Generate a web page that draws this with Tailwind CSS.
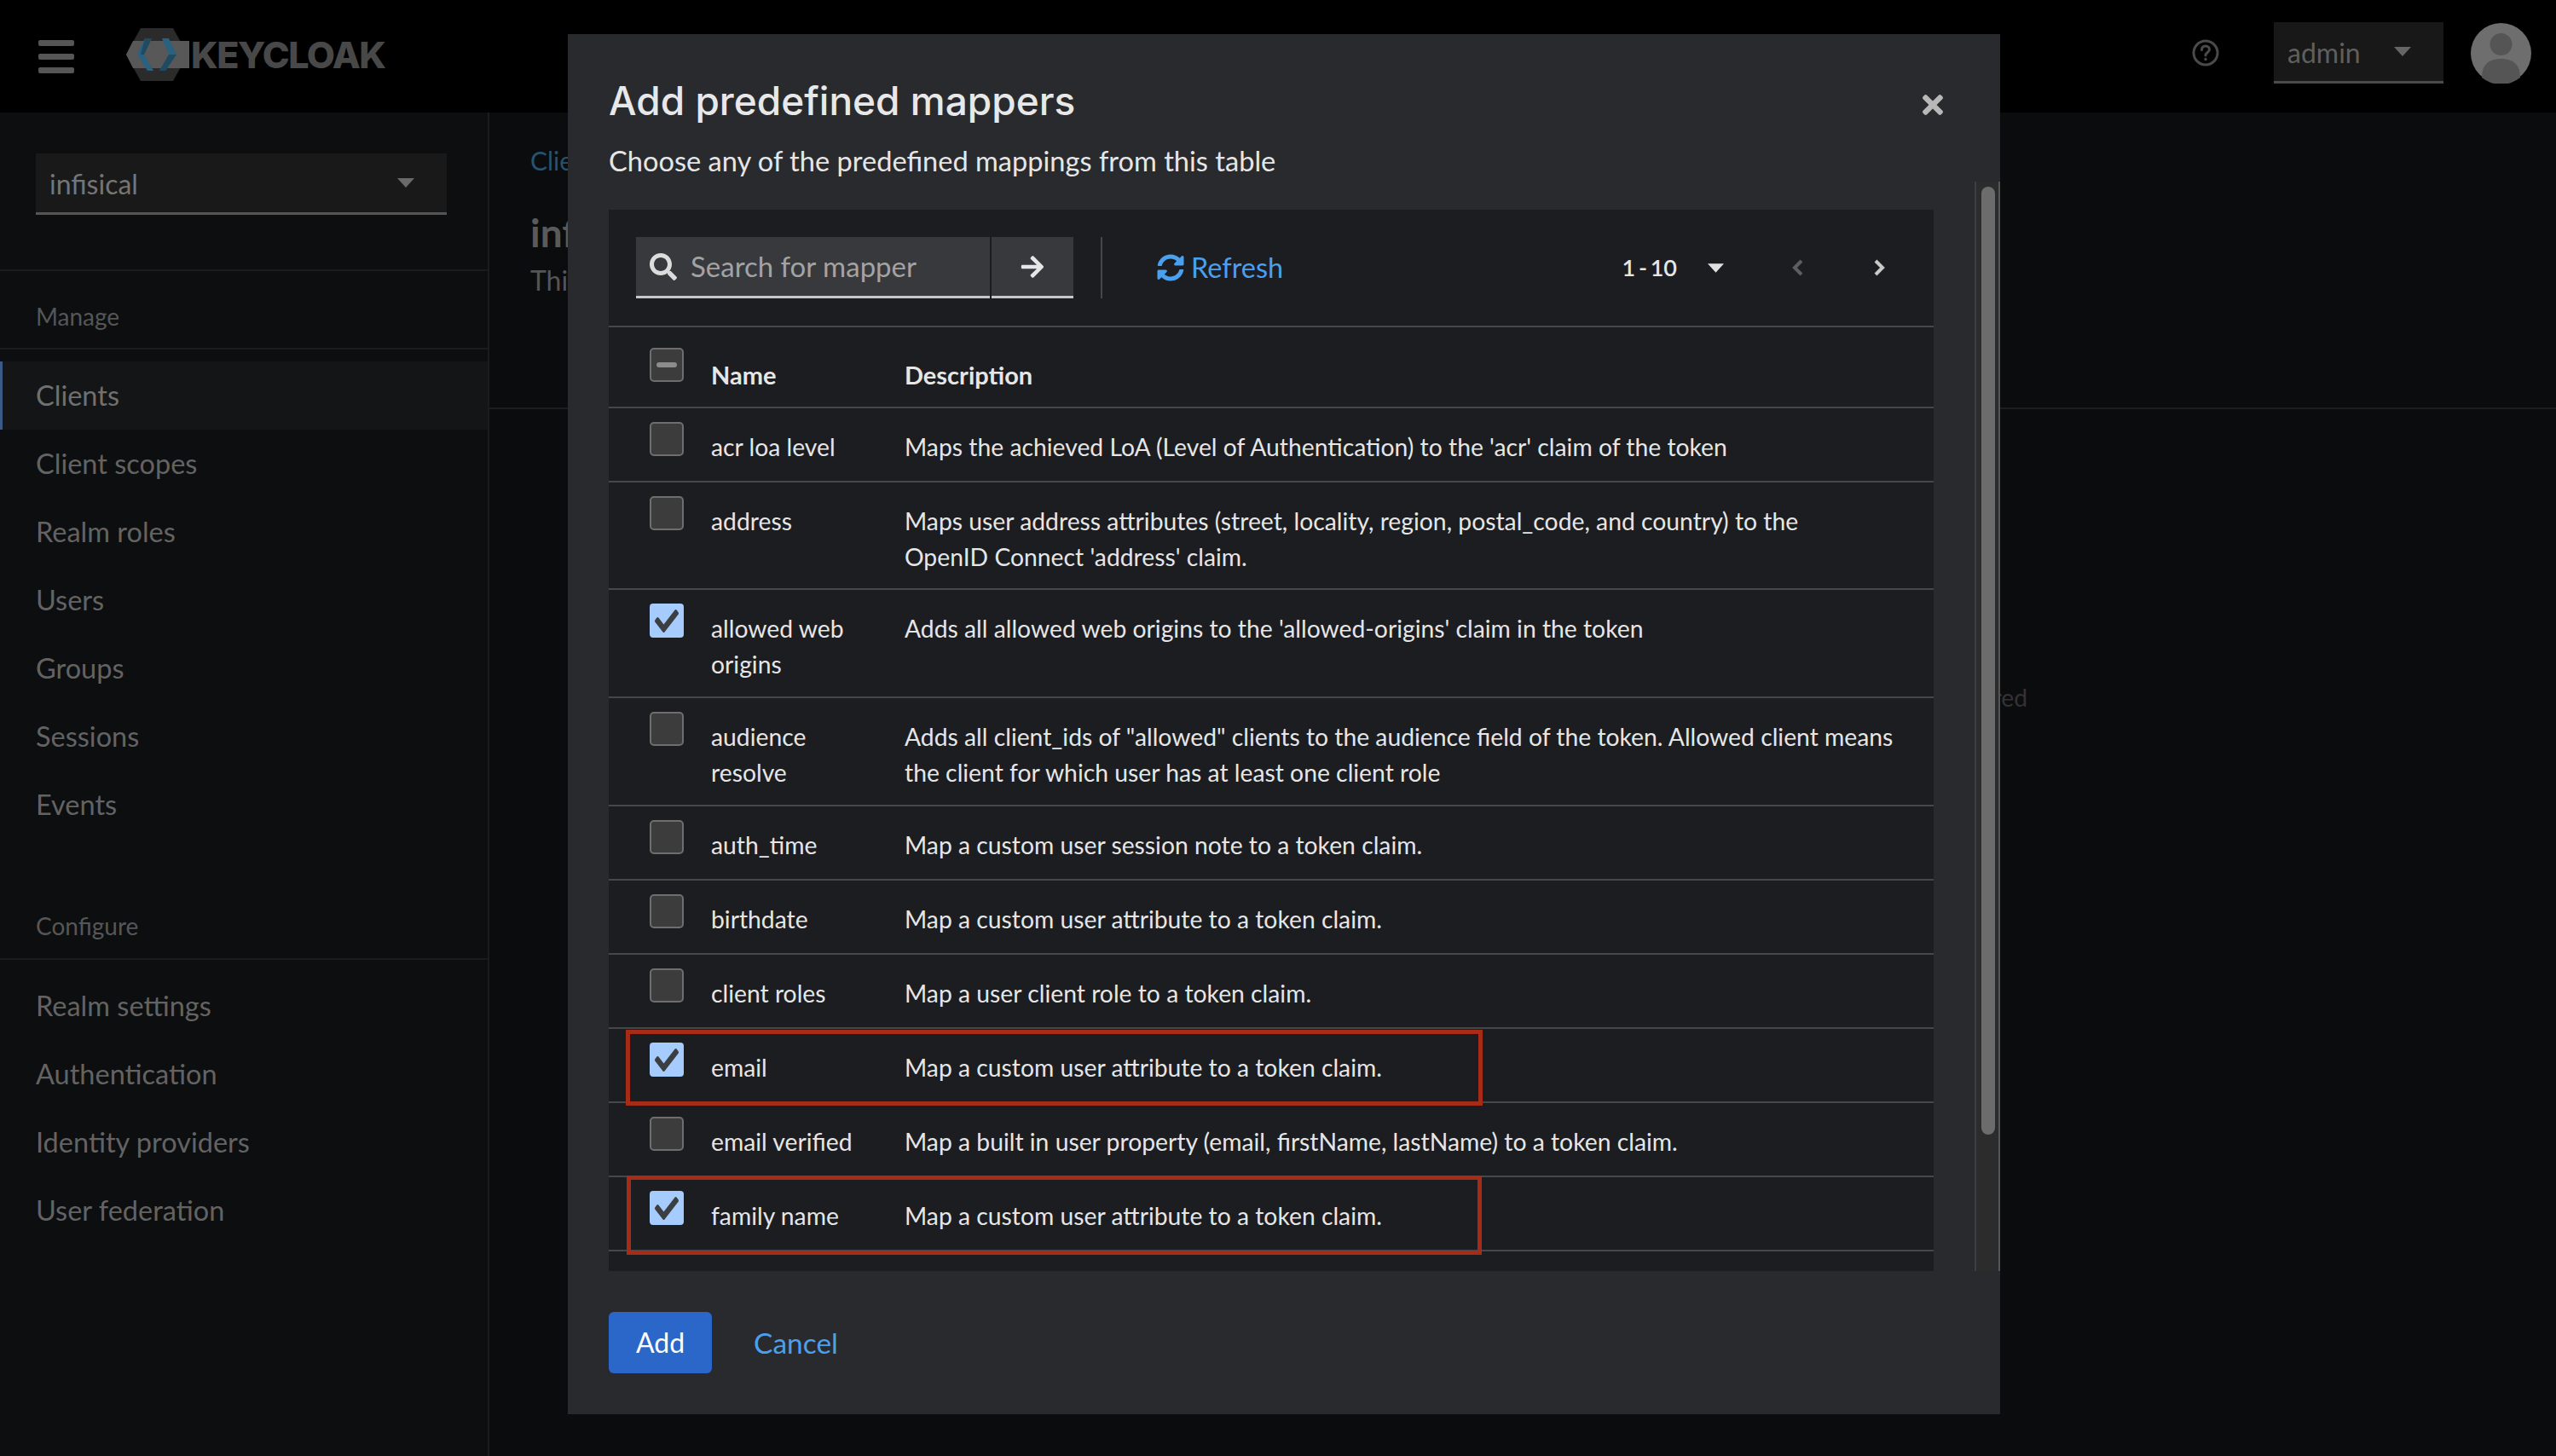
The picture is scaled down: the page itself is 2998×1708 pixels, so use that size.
<!DOCTYPE html>
<html lang="en">
<head>
    <meta charset="UTF-8">
    <title>Keycloak - Add predefined mappers</title>
    <script src="https://cdn.jsdelivr.net/npm/@tailwindcss/browser@4"></script>
</head>
<body class="relative w-[2998px] h-[1708px] overflow-hidden bg-[#0b0c0e] font-[Lato,sans-serif] text-[28.3px]">
    <svg class="hidden">
        <symbol id="check" viewBox="0 64 512 384" preserveAspectRatio="none"><path d="M173.898 439.404l-166.4-166.4c-9.997-9.997-9.997-26.206 0-36.204l36.203-36.204c9.997-9.998 26.207-9.998 36.204 0L192 312.69 432.095 72.596c9.997-9.997 26.207-9.997 36.204 0l36.203 36.204c9.997 9.997 9.997 26.206 0 36.204l-294.4 294.401c-9.998 9.997-26.207 9.997-36.204-.001z"/></symbol>
    </svg>

    <!-- page behind the modal, already dimmed -->
    <header class="flex items-center h-[132px] bg-black">
        <div class="flex flex-col gap-[9px] ml-[45px] w-[42px]">
            <span class="h-[7px] rounded-[2px] bg-[#565656]"></span>
            <span class="h-[7px] rounded-[2px] bg-[#565656]"></span>
            <span class="h-[7px] rounded-[2px] bg-[#565656]"></span>
        </div>
        <svg class="ml-[61px] mt-[-4px]" width="74" height="62" viewBox="148 33 74 62">
            <polygon points="148,64 165,33 203,33 220,64 203,95 165,95" fill="#2b2b2b"/>
            <polygon points="156,48 222,48 222,80 156,80 148,64" fill="#585858"/>
            <polygon points="170,45 178,45 169,64 180,83 173,83 161,64" fill="#2a617f"/>
            <polygon points="190,45 198,45 207,64 194,83 187,83 198,64" fill="#2a617f"/>
            <polygon points="170,45 178,45 169,64 165,64" fill="#1f4a62"/>
            <polygon points="198,64 207,64 194,83 187,83" fill="#1f4a62"/>
        </svg>
        <span class="font-[Inter,sans-serif] font-extrabold text-[43px] tracking-[-1.5px] text-[#484848] ml-[2px] mt-[-4px]">KEYCLOAK</span>
        <svg class="ml-auto mt-[-8px]" width="32" height="32" viewBox="0 0 32 32" fill="none" stroke="#4a4a4a" stroke-width="3"><circle cx="16" cy="16" r="14"/><path d="M11.5 12.5c0-3 2-4.500 4.500-4.500s4.500 1.700 4.500 4c0 3.500-4.500 3.500-4.500 7" stroke-linecap="round"/><circle cx="16" cy="23.500" r="1" fill="#4a4a4a" stroke-width="1.500"/></svg>
        <div class="flex items-center ml-[64px] mt-[-8px] w-[199px] h-[72px] bg-[#181818] border-b-[3px] border-[#4b4b4b] pl-[16px] text-[32px] text-[#5f5f5f]">
            <span class="mt-[2px]">admin</span>
            <svg class="ml-[39px]" width="20" height="11" viewBox="0 0 20 11"><polygon points="0,0 20,0 10,11" fill="#666"/></svg>
        </div>
        <svg class="ml-[32px] mr-[29px] mt-[-8px]" width="71" height="71" viewBox="0 0 71 71"><circle cx="35.500" cy="35.500" r="35.500" fill="#6e6e6e"/><circle cx="35.500" cy="25" r="13" fill="#555"/><path d="M13 64c0-16 9-22 22.500-22S58 48 58 64a35.500 35.500 0 0 1-45 0z" fill="#555"/></svg>
    </header>

    <div class="flex h-[1576px]">
        <aside class="w-[574px] shrink-0 border-r-2 border-[#1a1c1e] bg-[#0d0e10]">
            <div class="ml-[42px] mr-[48px] mt-[48px] flex items-center justify-between h-[72px] bg-[#19191a] border-b-[3px] border-[#555] pl-[16px] pr-[38px] text-[#757575] text-[32px]">
                <span class="mt-[2px]">infisical</span>
                <svg width="20" height="11" viewBox="0 0 20 11"><polygon points="0,0 20,0 10,11" fill="#6a6a6a"/></svg>
            </div>
            <div class="mt-[64px] border-t-2 border-[#1a1c1e] h-[92px] pt-[16px] pl-[42px] flex items-center text-[28px] text-[#565656]">Manage</div>
            <nav class="border-t-2 border-[#1a1c1e] pt-[14px] text-[32.5px] text-[#636363]">
                <div class="flex items-center h-[80px] pl-[39px] bg-[#131517] border-l-[3px] border-[#3b5a85] text-[#707070]">Clients</div>
                <div class="flex items-center h-[80px] pl-[42px]">Client scopes</div>
                <div class="flex items-center h-[80px] pl-[42px]">Realm roles</div>
                <div class="flex items-center h-[80px] pl-[42px]">Users</div>
                <div class="flex items-center h-[80px] pl-[42px]">Groups</div>
                <div class="flex items-center h-[80px] pl-[42px]">Sessions</div>
                <div class="flex items-center h-[80px] pl-[42px]">Events</div>
            </nav>
            <div class="mt-[64px] h-[78px] pl-[42px] flex items-center text-[28px] text-[#565656] border-b-2 border-[#1a1c1e]">Configure</div>
            <nav class="pt-[14px] text-[32.5px] text-[#636363]">
                <div class="flex items-center h-[80px] pl-[42px]">Realm settings</div>
                <div class="flex items-center h-[80px] pl-[42px]">Authentication</div>
                <div class="flex items-center h-[80px] pl-[42px]">Identity providers</div>
                <div class="flex items-center h-[80px] pl-[42px]">User federation</div>
            </nav>
        </aside>
        <main class="flex-1">
            <div class="h-[348px] border-b-2 border-[#1c1e20] pl-[48px] pt-[34px]">
                <div class="text-[30px] text-[#265273]">Clients</div>
                <div class="mt-[34px] text-[46px] font-bold text-[#5a5a5a] leading-[56px]">infisical</div>
                <div class="mt-[4px] text-[32px] text-[#555]">This client</div>
            </div>
            <div class="mt-[317px] pr-[620px] text-right text-[28.3px] text-[#333]">There are no mappers configured</div>
        </main>
    </div>

    <!-- modal -->
    <section class="absolute left-[666px] top-[40px] w-[1680px] h-[1619px] bg-[#292a2e] pl-[48px] text-[#e6e6e6]">
        <h1 class="pt-[45px] font-[Inter,sans-serif] text-[46px] leading-[66px] font-medium text-[#e8e8e8]">Add predefined mappers</h1>
        <p class="mt-[16px] text-[32.6px] leading-[44px]">Choose any of the predefined mappings from this table</p>
        <svg class="absolute right-[67px] top-[71px]" width="24" height="24" viewBox="22 80 308 352"><path fill="#b8b8b8" d="M242.72 256l100.07-100.07c12.28-12.28 12.28-32.19 0-44.48l-22.24-22.24c-12.28-12.28-32.19-12.28-44.48 0L176 189.28 75.93 89.21c-12.28-12.28-32.19-12.28-44.48 0L9.21 111.45c-12.28 12.28-12.28 32.19 0 44.48L109.28 256 9.21 356.07c-12.28 12.28-12.28 32.19 0 44.48l22.24 22.24c12.28 12.28 32.2 12.28 44.48 0L176 322.72l100.07 100.07c12.28 12.28 32.2 12.28 44.48 0l22.24-22.24c12.28-12.28 12.28-32.19 0-44.48L242.72 256z"/></svg>

        <div class="absolute left-[48px] top-[206px] w-[1554px] h-[1245px] overflow-hidden bg-[#1c1d21]">
            <div class="flex items-start h-[138px] pt-[32px] pl-[32px] border-b-2 border-[#45474b]">
                <div class="flex items-center w-[415px] h-[72px] bg-[#38393c] border-b-[3px] border-[#c7c7c7] pl-[16px] text-[33px] text-[#a3a3a3]">
                    <svg width="32" height="32" viewBox="0 0 512 512"><path fill="#dcdcdc" d="M505 442.7L405.3 343c-4.5-4.5-10.6-7-17-7H372c27.600-35.300 44-79.700 44-128C416 93.100 322.900 0 208 0S0 93.100 0 208s93.100 208 208 208c48.300 0 92.700-16.400 128-44v16.300c0 6.400 2.500 12.500 7 17l99.700 99.700c9.400 9.400 24.600 9.400 33.900 0l28.300-28.300c9.400-9.400 9.400-24.600.1-34zM208 336c-70.700 0-128-57.200-128-128 0-70.700 57.200-128 128-128 70.700 0 128 57.200 128 128 0 70.700-57.200 128-128 128z"/></svg>
                    <span class="ml-[16px]">Search for mapper</span>
                </div>
                <div class="flex items-center justify-center ml-[2px] w-[96px] h-[72px] bg-[#38393c] border-b-[3px] border-[#c7c7c7]">
                    <svg width="28" height="30" viewBox="0 0 448 512"><path fill="#e6e6e6" d="M190.500 66.900l22.200-22.200c9.400-9.400 24.600-9.400 33.900 0L441 239c9.400 9.400 9.400 24.600 0 33.900L246.600 467.300c-9.400 9.400-24.600 9.400-33.900 0l-22.200-22.200c-9.500-9.500-9.300-25 .4-34.300L311.400 296H24c-13.300 0-24-10.700-24-24v-32c0-13.300 10.700-24 24-24h287.400L190.900 101.200c-9.800-9.300-10-24.800-.4-34.300z"/></svg>
                </div>
                <div class="ml-[32px] w-[2px] h-[72px] bg-[#45474b]"></div>
                <div class="flex items-center h-[72px] ml-[64px] text-[32.5px] text-[#4aa0ee]">
                    <svg width="32" height="32" viewBox="0 0 512 512"><path fill="#4aa0ee" d="M370.720 133.280C339.458 104.008 298.888 87.962 255.848 88c-77.458.068-144.328 53.178-162.791 126.850-1.344 5.363-6.122 9.150-11.651 9.150H24.103c-7.498 0-13.194-6.807-11.807-14.176C33.933 94.924 134.813 8 256 8c66.448 0 126.791 26.136 171.315 68.685L463.030 40.970C478.149 25.851 504 36.559 504 57.941V192c0 13.255-10.745 24-24 24H345.941c-21.382 0-32.090-25.851-16.971-40.971l41.750-41.749zM32 296h134.059c21.382 0 32.090 25.851 16.971 40.971l-41.750 41.750c31.262 29.273 71.835 45.319 114.876 45.280 77.418-.07 144.315-53.144 162.787-126.849 1.344-5.363 6.122-9.150 11.651-9.150h57.304c7.498 0 13.194 6.807 11.807 14.176C478.067 417.076 377.187 504 256 504c-66.448 0-126.791-26.136-171.315-68.685L48.970 471.030C33.851 486.149 8 475.441 8 454.059V320c0-13.255 10.745-24 24-24z"/></svg>
                    <span class="ml-[8px]">Refresh</span>
                </div>
                <div class="flex items-center h-[72px] ml-auto text-[27px] text-[#e6e6e6] font-semibold">
                    <span class="[word-spacing:-3px]">1 - 10</span>
                    <svg class="ml-[36px]" width="19" height="11" viewBox="0 0 20 11"><polygon points="0,0 20,0 10,11" fill="#e0e0e0"/></svg>
                    <svg class="ml-[79px]" width="16" height="20" viewBox="0 0 16 20" fill="none" stroke="#5c5e62" stroke-width="4"><polyline points="12,2 4,10 12,18"/></svg>
                    <svg class="ml-[79px] mr-[56px]" width="16" height="20" viewBox="0 0 16 20" fill="none" stroke="#c8c8c8" stroke-width="4"><polyline points="4,2 12,10 4,18"/></svg>
                </div>
            </div>

            <div class="flex h-[95px] border-b-2 border-[#45474b]">
                <div class="w-[120px] pl-[48px] pt-[24px]">
                    <div class="flex items-center justify-center w-[40px] h-[40px] rounded-[5px] bg-[#3c3c3c] border-2 border-[#6e6e6e]"><span class="w-[24px] h-[6px] rounded-[3px] bg-[#8c8c8c]"></span></div>
                </div>
                <div class="w-[227px] pt-[36px] text-[29px] leading-[40px] font-bold">Name</div>
                <div class="flex-1 pt-[36px] text-[29px] leading-[40px] font-bold">Description</div>
            </div>

            <div class="flex h-[87px] border-b-2 border-[#45474b] leading-[42px]">
                <div class="w-[120px] pl-[48px] pt-[16px]"><div class="w-[40px] h-[40px] rounded-[5px] bg-[#3c3c3c] border-2 border-[#6e6e6e]"></div></div>
                <div class="w-[227px] pt-[24px]">acr loa level</div>
                <div class="flex-1 pt-[24px]">Maps the achieved LoA (Level of Authentication) to the 'acr' claim of the token</div>
            </div>
            <div class="flex h-[126px] border-b-2 border-[#45474b] leading-[42px]">
                <div class="w-[120px] pl-[48px] pt-[16px]"><div class="w-[40px] h-[40px] rounded-[5px] bg-[#3c3c3c] border-2 border-[#6e6e6e]"></div></div>
                <div class="w-[227px] pt-[24px]">address</div>
                <div class="flex-1 pt-[24px]">Maps user address attributes (street, locality, region, postal_code, and country) to the<br>OpenID Connect 'address' claim.</div>
            </div>
            <div class="flex h-[127px] border-b-2 border-[#45474b] leading-[42px]">
                <div class="w-[120px] pl-[48px] pt-[16px]"><div class="flex items-center justify-center w-[40px] h-[40px] rounded-[4px] bg-[#a6cbfd] text-[#3c3f42]"><svg class="fill-current" width="28" height="27"><use href="#check"/></svg></div></div>
                <div class="w-[227px] pt-[24px]">allowed web<br>origins</div>
                <div class="flex-1 pt-[24px]">Adds all allowed web origins to the 'allowed-origins' claim in the token</div>
            </div>
            <div class="flex h-[127px] border-b-2 border-[#45474b] leading-[42px]">
                <div class="w-[120px] pl-[48px] pt-[16px]"><div class="w-[40px] h-[40px] rounded-[5px] bg-[#3c3c3c] border-2 border-[#6e6e6e]"></div></div>
                <div class="w-[227px] pt-[24px]">audience<br>resolve</div>
                <div class="flex-1 pt-[24px]">Adds all client_ids of "allowed" clients to the audience field of the token. Allowed client means<br>the client for which user has at least one client role</div>
            </div>
            <div class="flex h-[87px] border-b-2 border-[#45474b] leading-[42px]">
                <div class="w-[120px] pl-[48px] pt-[16px]"><div class="w-[40px] h-[40px] rounded-[5px] bg-[#3c3c3c] border-2 border-[#6e6e6e]"></div></div>
                <div class="w-[227px] pt-[24px]">auth_time</div>
                <div class="flex-1 pt-[24px]">Map a custom user session note to a token claim.</div>
            </div>
            <div class="flex h-[87px] border-b-2 border-[#45474b] leading-[42px]">
                <div class="w-[120px] pl-[48px] pt-[16px]"><div class="w-[40px] h-[40px] rounded-[5px] bg-[#3c3c3c] border-2 border-[#6e6e6e]"></div></div>
                <div class="w-[227px] pt-[24px]">birthdate</div>
                <div class="flex-1 pt-[24px]">Map a custom user attribute to a token claim.</div>
            </div>
            <div class="flex h-[87px] border-b-2 border-[#45474b] leading-[42px]">
                <div class="w-[120px] pl-[48px] pt-[16px]"><div class="w-[40px] h-[40px] rounded-[5px] bg-[#3c3c3c] border-2 border-[#6e6e6e]"></div></div>
                <div class="w-[227px] pt-[24px]">client roles</div>
                <div class="flex-1 pt-[24px]">Map a user client role to a token claim.</div>
            </div>
            <div class="flex h-[87px] border-b-2 border-[#45474b] leading-[42px]">
                <div class="w-[120px] pl-[48px] pt-[16px]"><div class="flex items-center justify-center w-[40px] h-[40px] rounded-[4px] bg-[#a6cbfd] text-[#3c3f42]"><svg class="fill-current" width="28" height="27"><use href="#check"/></svg></div></div>
                <div class="w-[227px] pt-[24px]">email</div>
                <div class="flex-1 pt-[24px]">Map a custom user attribute to a token claim.</div>
            </div>
            <div class="flex h-[87px] border-b-2 border-[#45474b] leading-[42px]">
                <div class="w-[120px] pl-[48px] pt-[16px]"><div class="w-[40px] h-[40px] rounded-[5px] bg-[#3c3c3c] border-2 border-[#6e6e6e]"></div></div>
                <div class="w-[227px] pt-[24px]">email verified</div>
                <div class="flex-1 pt-[24px]">Map a built in user property (email, firstName, lastName) to a token claim.</div>
            </div>
            <div class="flex h-[87px] border-b-2 border-[#45474b] leading-[42px]">
                <div class="w-[120px] pl-[48px] pt-[16px]"><div class="flex items-center justify-center w-[40px] h-[40px] rounded-[4px] bg-[#a6cbfd] text-[#3c3f42]"><svg class="fill-current" width="28" height="27"><use href="#check"/></svg></div></div>
                <div class="w-[227px] pt-[24px]">family name</div>
                <div class="flex-1 pt-[24px]">Map a custom user attribute to a token claim.</div>
            </div>
        </div>

        <!-- scrollbar -->
        <div class="absolute right-0 top-[173px] w-[30px] h-[1278px] bg-[#2c2c2c] border-x-2 border-l-[#3c3f42] border-r-[#555]">
            <div class="mt-[6px] ml-[6px] w-[16px] h-[1112px] rounded-full bg-[#6c6c6c]"></div>
        </div>

        <div class="absolute left-[48px] top-[1499px] flex items-center text-[32px]">
            <button class="w-[121px] h-[72px] rounded-[6px] bg-[#2b66c9] text-white">Add</button>
            <a class="ml-[49px] text-[33.5px] text-[#4aa0ee]">Cancel</a>
        </div>

        <!-- annotation boxes drawn on the screenshot -->
        <div class="absolute left-[68px] top-[1168px] w-[1005px] h-[89px] border-[5px] border-[#a72c17]"></div>
        <div class="absolute left-[69px] top-[1339px] w-[1003px] h-[93px] border-[5px] border-[#a72c17]"></div>
    </section>
</body>
</html>
